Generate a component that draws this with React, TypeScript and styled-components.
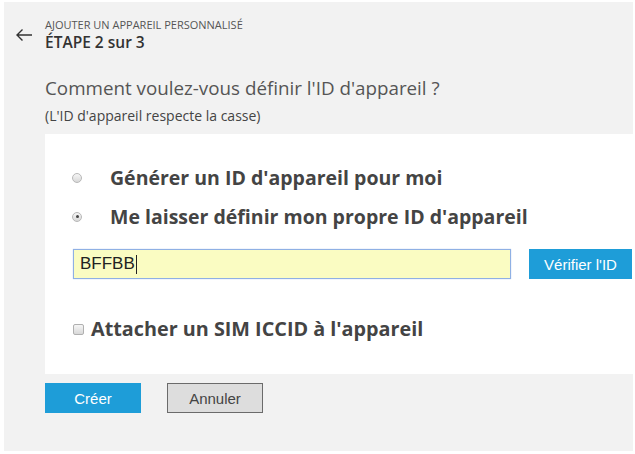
import React from "react";
import styled, { createGlobalStyle } from "styled-components";

const Global = createGlobalStyle`
  html, body { margin: 0; padding: 0; background: #ffffff; }
  body { width: 635px; height: 454px; overflow: hidden; }
`;

const Page = styled.div`
  margin: 2px 2px 3px 4px;
  height: 449px;
  background: #f2f2f2;
  font-family: "Open Sans", "Noto Sans", sans-serif;
  color: #444;
  display: flex;
  flex-direction: column;
`;

const Header = styled.div`
  display: flex;
  align-items: flex-start;
  padding-top: 16px;
`;

const BackButton = styled.div`
  width: 41px;
  display: flex;
  justify-content: center;
  padding-top: 10px;
  margin-left: -1px;
  color: #333;
`;

const HeaderText = styled.div`
  display: flex;
  flex-direction: column;
  margin-left: 1px;
`;

const Eyebrow = styled.div`
  font-size: 11px;
  line-height: 14px;
  color: #555;
  letter-spacing: 0;
`;

const StepTitle = styled.div`
  font-size: 15.5px;
  line-height: 21px;
  font-weight: 600;
  color: #333;
`;

const Body = styled.div`
  padding-left: 41px;
  display: flex;
  flex-direction: column;
`;

const Question = styled.div`
  margin-top: 23px;
  font-size: 18.8px;
  line-height: 24px;
  color: #555;
`;

const Note = styled.div`
  margin-top: 8px;
  font-size: 14px;
  line-height: 16px;
  color: #444;
  letter-spacing: 0;
`;

const Card = styled.div`
  margin-top: 10px;
  height: 240px;
  background: #ffffff;
  padding: 24px 0 0 27px;
  box-sizing: border-box;
  display: flex;
  flex-direction: column;
`;

const OptionRow = styled.label`
  display: flex;
  align-items: center;
  height: 39px;
  line-height: 26px;
  font-size: 19.5px;
  font-weight: 700;
  color: #444;
`;

const Radio = styled.span<{ $checked?: boolean }>`
  width: 8px;
  height: 8px;
  flex: none;
  border-radius: 50%;
  border: 1px solid #b8b8b8;
  background: linear-gradient(#f6f6f6, #d8d8d8);
  margin: 0 28px 0 0;
  display: flex;
  align-items: center;
  justify-content: center;
  &::after {
    content: "";
    width: 3px;
    height: 3px;
    border-radius: 50%;
    background: #444;
    display: ${(p) => (p.$checked ? "block" : "none")};
  }
`;

const InputRow = styled.div`
  display: flex;
  align-items: center;
  margin-top: 13px;
  margin-left: 1px;
  gap: 18px;
`;

const IdInput = styled.div`
  width: 438px;
  height: 30px;
  box-sizing: border-box;
  border: 1px solid #8fb0e4;
  box-shadow: 0 0 1px #a9c3ec;
  background: #fafcc2;
  font-family: "Liberation Sans", Arial, sans-serif;
  font-size: 17px;
  color: #222;
  padding-left: 6px;
  display: flex;
  align-items: center;
`;

const Caret = styled.span`
  display: inline-block;
  width: 1px;
  height: 19px;
  background: #222;
  margin-left: 1px;
`;

const PrimaryButton = styled.button<{ $width: number }>`
  width: ${(p) => p.$width}px;
  height: 30px;
  border: none;
  background: #1e9dd8;
  color: #ffffff;
  font-family: "Liberation Sans", Arial, sans-serif;
  font-size: 15px;
  padding: 0;
`;

const CheckRow = styled.label`
  display: flex;
  align-items: center;
  margin-top: 37px;
  line-height: 26px;
  font-size: 19.8px;
  font-weight: 700;
  color: #444;
`;

const Checkbox = styled.span`
  width: 9px;
  height: 9px;
  flex: none;
  border: 1px solid #b0b0b0;
  border-radius: 2px;
  background: linear-gradient(#f6f6f6, #d8d8d8);
  margin: 0 7px 0 1px;
`;

const Actions = styled.div`
  display: flex;
  gap: 26px;
  margin-top: 9px;
`;

const SecondaryButton = styled.button`
  width: 96px;
  height: 30px;
  box-sizing: border-box;
  border: 1px solid #6b6b6b;
  background: #dddddd;
  color: #444;
  font-family: "Liberation Sans", Arial, sans-serif;
  font-size: 15px;
  padding: 0;
`;

export default function App() {
  return (
    <>
      <Global />
      <Page>
        <Header>
          <BackButton>
            <svg width="18" height="14" viewBox="0 0 18 14" fill="none" stroke="#333" strokeWidth="1.4">
              <path d="M17 7H2M7.5 1.5L2 7l5.5 5.5" />
            </svg>
          </BackButton>
          <HeaderText>
            <Eyebrow>AJOUTER UN APPAREIL PERSONNALISÉ</Eyebrow>
            <StepTitle>ÉTAPE 2 sur 3</StepTitle>
          </HeaderText>
        </Header>
        <Body>
          <Question>Comment voulez-vous définir l'ID d'appareil ?</Question>
          <Note>(L'ID d'appareil respecte la casse)</Note>
          <Card>
            <OptionRow>
              <Radio />
              Générer un ID d'appareil pour moi
            </OptionRow>
            <OptionRow>
              <Radio $checked />
              Me laisser définir mon propre ID d'appareil
            </OptionRow>
            <InputRow>
              <IdInput>
                BFFBB<Caret />
              </IdInput>
              <PrimaryButton $width={103}>Vérifier l'ID</PrimaryButton>
            </InputRow>
            <CheckRow>
              <Checkbox />
              Attacher un SIM ICCID à l'appareil
            </CheckRow>
          </Card>
          <Actions>
            <PrimaryButton $width={96}>Créer</PrimaryButton>
            <SecondaryButton>Annuler</SecondaryButton>
          </Actions>
        </Body>
      </Page>
    </>
  );
}
